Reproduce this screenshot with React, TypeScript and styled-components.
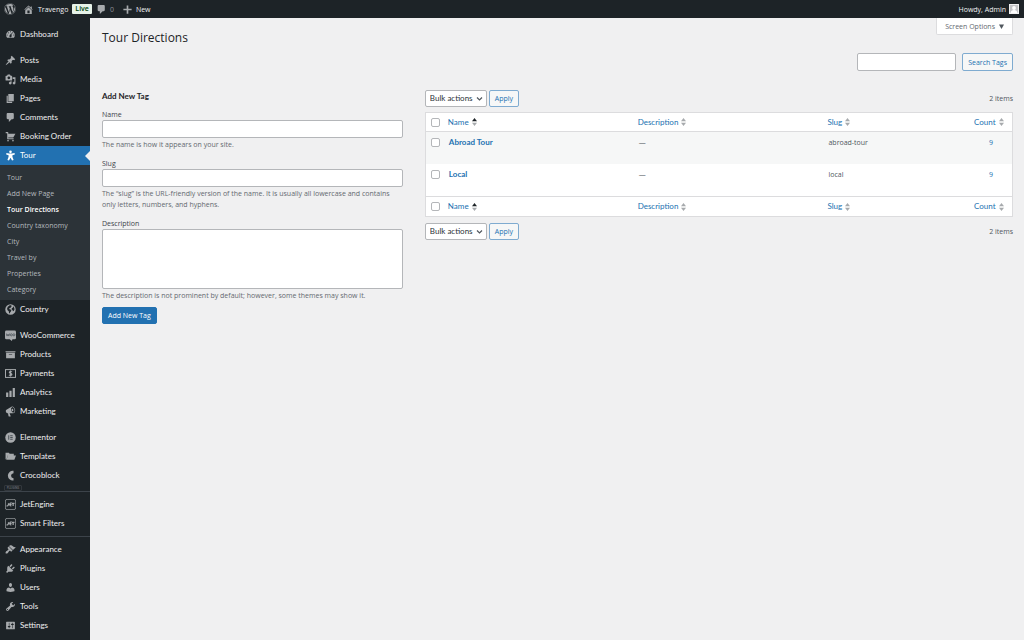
import React from "react";
import styled, { createGlobalStyle } from "styled-components";
import { FaWordpress } from "react-icons/fa";

const Global = createGlobalStyle`
  *, *::before, *::after { box-sizing: border-box; }
  body {
    margin: 0;
    background: #f0f0f1;
    color: #3c434a;
    font-family: "Open Sans", "Noto Sans", sans-serif;
    font-size: 7px;
    line-height: 11px;
  }
  a { color: #2271b1; text-decoration: none; }
  button, input, select, textarea { font: inherit; color: inherit; margin: 0; }
`;

const menuFont = `Lato, "Open Sans", sans-serif`;

/* ---------- icons ---------- */

const Svg = styled.svg<{ $size?: number }>`
  display: block;
  flex: none;
  width: ${(p) => p.$size ?? 11}px;
  height: ${(p) => p.$size ?? 11}px;
  fill: currentColor;
`;

const paths = {
  dashboard:
    "M3.76 16h12.48c1.1-1.37 1.76-3.11 1.76-5 0-4.42-3.58-8-8-8s-8 3.58-8 8c0 1.89.66 3.63 1.76 5zM10 4c.55 0 1 .45 1 1s-.45 1-1 1-1-.45-1-1 .45-1 1-1zM6 6c.55 0 1 .45 1 1s-.45 1-1 1-1-.45-1-1 .45-1 1-1zm8 0c.55 0 1 .45 1 1s-.45 1-1 1-1-.45-1-1 .45-1 1-1zm-5.37 5.55L12 7v6c0 1.1-.9 2-2 2s-2-.9-2-2c0-.57.24-1.08.63-1.45zM4 10c.55 0 1 .45 1 1s-.45 1-1 1-1-.45-1-1 .45-1 1-1zm12 0c.55 0 1 .45 1 1s-.45 1-1 1-1-.45-1-1 .45-1 1-1z",
  post: "M10.44 3.02l1.82-1.82 6.36 6.35-1.83 1.82c-1.05-.68-2.48-.57-3.41.36l-.75.75c-.92.93-1.04 2.35-.35 3.41l-1.83 1.82-2.41-2.41-2.8 2.79c-.42.42-3.38 2.71-3.8 2.29s1.86-3.39 2.28-3.81l2.79-2.79L4.1 9.36l1.83-1.82c1.05.69 2.48.57 3.4-.36l.75-.75c.93-.92 1.05-2.35.36-3.41z",
  media:
    "M13 11V4c0-.55-.45-1-1-1h-1.67L9 1H5L3.67 3H2c-.55 0-1 .45-1 1v7c0 .55.45 1 1 1h10c.55 0 1-.45 1-1zM7 4.5c1.38 0 2.5 1.12 2.5 2.5S8.38 9.5 7 9.5 4.5 8.38 4.5 7 5.62 4.5 7 4.5zM14 6h5v10.5c0 1.38-1.12 2.5-2.5 2.5S14 17.88 14 16.5s1.12-2.5 2.5-2.5c.17 0 .34.02.5.05V9h-3V6zm-4 8.05V13h2v3.5c0 1.38-1.12 2.5-2.5 2.5S7 17.88 7 16.5 8.12 14 9.5 14c.17 0 .34.02.5.05z",
  page: "M6 15V2h10v13H6zm-1 1h8v2H3V5h2v11z",
  comment:
    "M5 2h9c1.1 0 2 .9 2 2v7c0 1.1-.9 2-2 2h-2l-5 5v-5H5c-1.1 0-2-.9-2-2V4c0-1.1.9-2 2-2z",
  cart: "M6 13h9c.55 0 1 .45 1 1s-.45 1-1 1H5c-.55 0-1-.45-1-1V4H2c-.55 0-1-.45-1-1s.45-1 1-1h3c.55 0 1 .45 1 1v2h13l-4 7H6v1zm-.5 3c.83 0 1.5.67 1.5 1.5S6.33 19 5.5 19 4 18.33 4 17.5 4.67 16 5.5 16zm9 0c.83 0 1.5.67 1.5 1.5s-.67 1.5-1.5 1.5-1.5-.67-1.5-1.5.67-1.5 1.5-1.5z",
  person:
    "M10 1a2.400 2.400 0 1 1 0 4.800 2.400 2.400 0 0 1 0-4.800zM2.600 5.600l5 .700h4.800l5-.700.4 2.600-4.300 1.200v3l2.100 5.800-2.800.900L10 14.200l-2.800 4.900-2.800-.9 2.100-5.800v-3L2.200 8.200z",
  globe:
    "M10 0.500a9.500 9.500 0 1 0 0 19 9.500 9.500 0 0 0 0-19zm-1.500 1.700l2.600.200 1.200 1.600-1.700 1.300-.6 1.800-2.100.4-.5 1.700 2.700.6 1.500 1.700-.9 2.100-1.300 1.600-.6 2.200-1.500-.9-.4-3.200-2.200-2-.9-2.700 1-3.300zm6.300 2.100l2 2.700.4 2.900-1.300 2.900-1.500.400-.7-2.200-1.700-.9.300-2.300 1.900-.9z",
  archive: "M19 4v2H1V4h18zM2 7h16v10H2V7zm11 3V9H7v1h6z",
  chart: "M18 18V2h-4v16h4zm-6 0V7H8v11h4zm-6 0v-8H2v8h4z",
  megaphone:
    "M18.15 5.94c.46 1.62.38 3.22-.02 4.48-.42 1.28-1.26 2.18-2.3 2.48-.16.06-.26.06-.4.06-.06.02-.12.02-.18.02-.06.02-.14.02-.22.02h-6.8l2.22 5.5c.02.14-.06.26-.14.34-.08.1-.24.16-.34.16H6.95c-.1 0-.26-.06-.34-.16-.08-.08-.16-.2-.14-.34l-1-5.5H4.25l-.02-.02c-.5.06-1.08-.18-1.54-.62s-.88-1.08-1.06-1.88c-.24-.8-.2-1.56-.02-2.2.18-.62.58-1.08 1.06-1.3l.02-.02 9-5.4c.1-.06.18-.1.24-.16.06-.04.14-.08.24-.12.16-.08.28-.12.5-.18 1.04-.3 2.24.1 3.22.98s1.84 2.24 2.26 3.86zm-2.58 5.98h-.02c.4-.1.74-.34 1.04-.7.58-.7.86-1.76.86-3.04 0-.64-.1-1.3-.28-1.98-.34-1.36-1.02-2.5-1.78-3.24s-1.68-1.1-2.46-.88c-.82.22-1.4.96-1.7 2-.32 1.04-.28 2.36.06 3.72.38 1.36 1 2.5 1.8 3.24.78.74 1.62 1.1 2.48.88zm-2.54-7.08c.22-.04.42-.02.62.04.38.16.76.48 1.02 1s.42 1.2.42 1.78c0 .3-.04.56-.12.8-.18.48-.44.84-.86.94-.34.1-.8-.06-1.14-.4s-.64-.86-.78-1.5c-.18-.62-.12-1.24.02-1.72s.48-.84.82-.94z",
  folder: "M1 15V3h6l1.500 2H16V8H5L2.500 15.500zM2.600 16L5.400 8H20L17 16z",
  crescent:
    "M15.500 1.500v4.300A4.600 4.600 0 0 0 11 10.300a4.800 4.800 0 0 0 4.500 4.700v4A9 9 0 0 1 5.200 10.200 8.900 8.900 0 0 1 15.500 1.500z",
  appearance:
    "M14.48 11.06L7.41 3.99l1.5-1.5c.5-.56 2.3-.47 3.51.32 1.21.8 1.43 1.28 2.91 2.1 1.18.64 2.45 1.26 4.45.85zm-.71.71L6.7 4.7 4.93 6.47c-.39.39-.39 1.02 0 1.41l1.06 1.06c.39.39.39 1.03 0 1.42-.6.6-1.43 1.11-2.21 1.69-.35.26-.7.53-1.01.84C1.43 14.23.4 16.08 1.4 17.07c.99 1 2.84-.03 4.18-1.36.31-.31.58-.66.85-1.02.57-.78 1.08-1.61 1.69-2.21.39-.39 1.02-.39 1.41 0l1.06 1.06c.39.39 1.02.39 1.41 0z",
  plugins:
    "M13.11 4.36L9.87 7.6 8 5.73l3.24-3.24c.35-.34 1.05-.2 1.56.32.52.51.66 1.21.31 1.55zm-8 1.77l.91-1.12 9.01 9.01-1.19.84c-.71.71-2.63 1.16-3.82 1.16H6.14L4.9 17.26c-.59.59-1.54.59-2.12 0-.59-.58-.59-1.53 0-2.12l1.24-1.24v-3.88c0-1.13.4-3.19 1.09-3.89zm7.26 3.97l3.24-3.24c.34-.35 1.04-.21 1.55.31.52.51.66 1.21.31 1.55l-3.24 3.25z",
  users:
    "M10 9.25c-2.27 0-2.73-3.44-2.73-3.44C7 4.02 7.82 2 9.97 2c2.16 0 2.98 2.02 2.71 3.81 0 0-.41 3.44-2.68 3.44zm0 2.57L12.72 10c2.39 0 4.52 2.33 4.52 4.53v2.49s-3.65 1.13-7.24 1.13c-3.65 0-7.24-1.13-7.24-1.13v-2.49c0-2.25 1.94-4.48 4.47-4.48z",
  tools:
    "M16.68 9.77c-1.34 1.34-3.3 1.67-4.95.99l-5.41 6.52c-.99.99-2.59.99-3.58 0s-.99-2.59 0-3.57l6.52-5.42c-.68-1.65-.35-3.61.99-4.95 1.28-1.28 3.12-1.62 4.72-1.06l-2.89 2.89 2.82 2.82 2.86-2.87c.53 1.58.18 3.39-1.08 4.65zM3.81 16.21c.4.39 1.04.39 1.43 0 .4-.4.4-1.04 0-1.43-.39-.4-1.03-.4-1.43 0-.39.39-.39 1.03 0 1.43z",
  settings:
    "M18 16V4c0-.55-.45-1-1-1H3c-.55 0-1 .45-1 1v12c0 .55.45 1 1 1h14c.55 0 1-.45 1-1zM8 11h1c.55 0 1 .45 1 1s-.45 1-1 1H8v1.5c0 .28-.22.5-.5.5s-.5-.22-.5-.5V13H6c-.55 0-1-.45-1-1s.45-1 1-1h1V5.5c0-.28.22-.5.5-.5s.5.22.5.5V11zm5-2h-1c-.55 0-1-.45-1-1s.45-1 1-1h1V5.5c0-.28.22-.5.5-.5s.5.22.5.5V7h1c.55 0 1 .45 1 1s-.45 1-1 1h-1v5.5c0 .28-.22.5-.5.5s-.5-.22-.5-.5V9z",
  home: "M16 8.5l1.53 1.53-1.06 1.06L10 4.6l-6.47 6.49-1.06-1.06L10 2.5l4 4v-2h2v4zm-6-2.46l6 5.99V18H4v-5.97zM12 17v-5H8v5h4z",
  plus: "M17.500 8.500v3h-6v6H8.500v-6H2.500V8.500h6V2.500h3v6z",
};

type PathName = keyof typeof paths;
type IconName = PathName | "woo" | "money" | "elementor" | "jet";

const Icon = ({ name, size }: { name: IconName; size?: number }) => {
  const common = { $size: size, viewBox: "0 0 20 20", "aria-hidden": true } as const;
  if (name === "woo")
    return (
      <Svg {...common}>
        <path d="M2.500 1h15A2.500 2.500 0 0 1 20 3.500v11a2.500 2.500 0 0 1-2.500 2.500H13.500l-1 3L8.500 17h-6A2.500 2.500 0 0 1 0 14.500v-11A2.500 2.500 0 0 1 2.500 1z" />
        <path d="M2.500 6.500l1.200 4.500L5.500 7.500l1.500 3.500L8.200 6.500" fill="none" stroke="#50575e" strokeWidth="1.500" />
        <circle cx="11.500" cy="8.800" r="1.900" fill="none" stroke="#50575e" strokeWidth="1.500" />
        <circle cx="16.200" cy="8.800" r="1.900" fill="none" stroke="#50575e" strokeWidth="1.500" />
      </Svg>
    );
  if (name === "money")
    return (
      <Svg {...common}>
        <rect x="0.900" y="2.900" width="18.200" height="14.200" fill="none" stroke="currentColor" strokeWidth="1.800" />
        <path
          d="M12.600 7.200C11.500 6 7.700 6.200 7.900 8c.2 2 4.600 1.600 4.600 3.900 0 2.100-4 2.200-5.100.7M10 4.600v10.800"
          fill="none"
          stroke="currentColor"
          strokeWidth="2.200"
        />
      </Svg>
    );
  if (name === "elementor")
    return (
      <Svg {...common}>
        <circle cx="10" cy="10" r="9.500" />
        <path d="M6.800 6v8M9.500 6.800h4.500M9.500 10h4.500M9.500 13.200h4.500" fill="none" stroke="#3c434a" strokeWidth="1.600" />
      </Svg>
    );
  if (name === "jet")
    return (
      <Svg {...common}>
        <rect x="0.700" y="0.700" width="18.600" height="18.600" rx="3" fill="none" stroke="currentColor" strokeWidth="1.300" />
        <path
          d="M2.800 12.200c2.600 1.200 3.600-.8 3.600-4.700M7.500 10h4.500M12 7.200c-4-.8-5 5.600-.5 5.200M12.500 7.800h4.800M14.800 7.800v5"
          fill="none"
          stroke="currentColor"
          strokeWidth="2.200"
        />
      </Svg>
    );
  return (
    <Svg {...common}>
      <path fillRule="evenodd" d={paths[name]} />
    </Svg>
  );
};

/* ---------- admin bar ---------- */

const AdminBar = styled.header`
  display: flex;
  justify-content: space-between;
  align-items: center;
  height: 18px;
  padding: 0 5px 0 4px;
  background: #1d2327;
  color: #f0f0f1;
`;

const BarGroup = styled.nav`
  display: flex;
  align-items: center;
`;

const BarLink = styled.a<{ $before?: number; $gap?: number }>`
  display: flex;
  align-items: center;
  gap: ${(p) => p.$gap ?? 4}px;
  margin-left: ${(p) => p.$before ?? 0}px;
  color: #f0f0f1;
  svg { color: #a7aaad; }
`;

const Muted = styled.span`
  color: #8c8f94;
`;

const LiveBadge = styled.span`
  margin-left: 4px;
  padding: 0 3px;
  line-height: 10px;
  border-radius: 1px;
  background: #e6f2e8;
  color: #00450c;
  font-weight: 600;
`;

const Avatar = styled.svg`
  display: block;
  width: 10px;
  height: 10px;
`;

/* ---------- side menu ---------- */

const Shell = styled.div`
  display: flex;
  min-height: calc(100vh - 18px);
`;

const Sidebar = styled.nav`
  flex: none;
  width: 90px;
  padding-top: 7px;
  background: #1d2327;
`;

const List = styled.ul`
  margin: 0;
  padding: 0;
  list-style: none;
`;

const MenuLink = styled.a<{ $current?: boolean }>`
  position: relative;
  display: flex;
  align-items: center;
  gap: 4px;
  height: 19px;
  padding-left: 5px;
  font-family: ${menuFont};
  font-size: 8px;
  color: ${(p) => (p.$current ? "#fff" : "#f0f0f1")};
  background: ${(p) => (p.$current ? "#2271b1" : "transparent")};
  svg { color: ${(p) => (p.$current ? "#fff" : "#a7aaad")}; }
  ${(p) =>
    p.$current &&
    `&::after {
      content: "";
      position: absolute;
      right: 0;
      top: 5px;
      border: 5px solid transparent;
      border-left-width: 0;
      border-right-color: #f0f0f1;
    }`}
`;

const SubList = styled(List)`
  padding: 5px 0 2px;
  background: #2c3338;
`;

const SubLink = styled.a<{ $current?: boolean }>`
  display: block;
  padding-left: 7px;
  line-height: 16px;
  color: ${(p) => (p.$current ? "#fff" : "#b4b9be")};
  font-weight: ${(p) => (p.$current ? 600 : 400)};
`;

const Gap = styled.li<{ $line?: boolean }>`
  height: 7px;
  padding-top: 3px;
  &::after {
    content: "";
    display: ${(p) => (p.$line ? "block" : "none")};
    border-top: 1px solid #3c434a;
  }
`;

const PluginsGap = styled.li`
  height: 10px;
  &::after {
    content: "";
    display: block;
    border-top: 1px solid #3c434a;
  }
`;

const PluginsTag = styled.span`
  display: block;
  width: 18px;
  height: 6px;
  margin-left: 4px;
  border: 1px solid #32373c;
  border-radius: 1px;
  color: #8c8f94;
  font-size: 3px;
  line-height: 4px;
  text-align: center;
`;

type Entry = { icon: IconName; label: string; sub?: string[] } | "gap" | "line" | "plugins";

const menu: Entry[] = [
  { icon: "dashboard", label: "Dashboard" },
  "gap",
  { icon: "post", label: "Posts" },
  { icon: "media", label: "Media" },
  { icon: "page", label: "Pages" },
  { icon: "comment", label: "Comments" },
  { icon: "cart", label: "Booking Order" },
  {
    icon: "person",
    label: "Tour",
    sub: [
      "Tour",
      "Add New Page",
      "Tour Directions",
      "Country taxonomy",
      "City",
      "Travel by",
      "Properties",
      "Category",
    ],
  },
  { icon: "globe", label: "Country" },
  "gap",
  { icon: "woo", label: "WooCommerce" },
  { icon: "archive", label: "Products" },
  { icon: "money", label: "Payments" },
  { icon: "chart", label: "Analytics" },
  { icon: "megaphone", label: "Marketing" },
  "gap",
  { icon: "elementor", label: "Elementor" },
  { icon: "folder", label: "Templates" },
  { icon: "crescent", label: "Crocoblock" },
  "plugins",
  { icon: "jet", label: "JetEngine" },
  { icon: "jet", label: "Smart Filters" },
  "line",
  { icon: "appearance", label: "Appearance" },
  { icon: "plugins", label: "Plugins" },
  { icon: "users", label: "Users" },
  { icon: "tools", label: "Tools" },
  { icon: "settings", label: "Settings" },
];

const SideMenu = () => (
  <Sidebar aria-label="Main menu">
    <List>
      {menu.map((entry, i) => {
        if (entry === "gap") return <Gap key={i} />;
        if (entry === "line") return <Gap key={i} $line />;
        if (entry === "plugins")
          return (
            <PluginsGap key={i}>
              <PluginsTag>PLUGINS</PluginsTag>
            </PluginsGap>
          );
        return (
          <li key={i}>
            <MenuLink href="#" $current={!!entry.sub}>
              <Icon name={entry.icon} />
              {entry.label}
            </MenuLink>
            {entry.sub && (
              <SubList>
                {entry.sub.map((label) => (
                  <li key={label}>
                    <SubLink href="#" $current={label === "Tour Directions"}>
                      {label}
                    </SubLink>
                  </li>
                ))}
              </SubList>
            )}
          </li>
        );
      })}
    </List>
  </Sidebar>
);

/* ---------- content ---------- */

const Main = styled.main`
  flex: 1;
  min-width: 0;
  padding: 0 11px 0 12px;
`;

const TopRow = styled.div`
  display: flex;
  justify-content: space-between;
  align-items: flex-start;
  height: 35px;
`;

const Title = styled.h1`
  margin: 10px 0 0;
  font-size: 12px;
  font-weight: 400;
  line-height: 20px;
  color: #1d2327;
`;

const ScreenOptions = styled.button`
  display: flex;
  align-items: center;
  gap: 4px;
  height: 17px;
  padding: 0 8px;
  border: 1px solid #dcdcde;
  border-top: 0;
  border-radius: 0 0 2px 2px;
  background: #fff;
  color: #646970;
`;

const TextInput = styled.input`
  display: block;
  width: 100%;
  height: 18px;
  padding: 0 4px;
  border: 1px solid #b4b6b9;
  border-radius: 2px;
  background: #fff;
`;

const Button = styled.button<{ $primary?: boolean }>`
  height: 17px;
  padding: 0 5px;
  border: 1px solid ${(p) => (p.$primary ? "#2271b1" : "#7fabd0")};
  border-radius: 2px;
  background: ${(p) => (p.$primary ? "#2271b1" : "#f6f7f7")};
  color: ${(p) => (p.$primary ? "#fff" : "#2271b1")};
  white-space: nowrap;
`;

const SearchForm = styled.form`
  display: flex;
  justify-content: flex-end;
  gap: 6px;
  ${TextInput} { width: 99px; }
  ${Button} { height: 18px; }
`;

const Columns = styled.div`
  display: grid;
  grid-template-columns: 35fr 65fr;
  margin-top: 19px;
`;

const AddForm = styled.form`
  padding-right: 18px;
`;

const FormTitle = styled.h2`
  margin: 0 0 6px;
  font-family: ${menuFont};
  font-size: 8px;
  font-weight: 700;
  line-height: 13px;
  color: #1d2327;
`;

const Field = styled.div`
  margin-bottom: 8px;
  &:last-of-type { margin-bottom: 6px; }
  label { display: block; }
`;

const TextArea = styled.textarea`
  display: block;
  width: 100%;
  height: 60px;
  border: 1px solid #b4b6b9;
  border-radius: 2px;
  background: #fff;
  resize: none;
`;

const Help = styled.p`
  margin: 1px 0 0;
  color: #646970;
`;

const ListPane = styled.section`
  padding-left: 4px;
  min-width: 0;
`;

const TableNav = styled.div`
  display: flex;
  align-items: center;
  gap: 2px;
  height: 17px;
`;

const SelectBox = styled.span`
  position: relative;
  display: block;
  svg {
    position: absolute;
    right: 4px;
    top: 6px;
    width: 7px;
    height: 6px;
    pointer-events: none;
  }
`;

const Select = styled.select`
  appearance: none;
  display: block;
  width: 62px;
  height: 17px;
  padding: 0 12px 0 4px;
  border: 1px solid #b4b6b9;
  border-radius: 2px;
  background: #fff;
  color: #2c3338;
  font-family: ${menuFont};
  font-size: 8px;
`;

const ItemCount = styled.span`
  margin-left: auto;
  color: #50575e;
`;

const Table = styled.table`
  width: 100%;
  margin: 5px 0 6px;
  table-layout: fixed;
  border: 1px solid #dcdcde;
  border-collapse: separate;
  border-spacing: 0;
  background: #fff;
  th, td { padding: 0 5px; text-align: left; font-weight: 400; }
  thead th { height: 19px; border-bottom: 1px solid #dcdcde; }
  tfoot th { height: 20px; border-top: 1px solid #dcdcde; }
  tbody td { height: 32px; padding: 5px 5px 0 6px; vertical-align: top; color: #50575e; }
  tbody th { height: 32px; padding-top: 6px; vertical-align: top; }
  tbody tr:nth-child(odd) { background: #f6f7f7; }
`;

const Col = styled.col<{ $width?: string }>`
  width: ${(p) => p.$width ?? "auto"};
`;

const Check = styled.input`
  appearance: none;
  display: block;
  width: 9px;
  height: 9px;
  border: 1px solid #b4b6b9;
  border-radius: 2px;
  background: #fff;
`;

const SortLink = styled.a`
  display: flex;
  align-items: center;
  gap: 3px;
  font-family: ${menuFont};
  font-size: 8px;
  svg { width: 5px; height: 8px; }
`;

const TermLink = styled.a`
  font-family: ${menuFont};
  font-size: 8px;
  font-weight: 700;
`;

const CountCell = styled.td`
  && { text-align: center; }
`;

const SortIcon = ({ active }: { active?: boolean }) => (
  <svg viewBox="0 0 10 16" aria-hidden="true">
    <path d="M5 0l5 6.500H0z" fill={active ? "#1d2327" : "#a7aaad"} />
    <path d="M5 16l5-6.500H0z" fill="#a7aaad" />
  </svg>
);

const HeadRow = ({ place }: { place: string }) => (
  <tr>
    <th>
      <Check type="checkbox" aria-label={`Select all, ${place}`} />
    </th>
    {["Name", "Description", "Slug", "Count"].map((label) => (
      <th key={label} scope="col">
        <SortLink href="#">
          {label}
          <SortIcon active={label === "Name"} />
        </SortLink>
      </th>
    ))}
  </tr>
);

const BulkNav = ({ place }: { place: string }) => (
  <TableNav>
    <SelectBox>
      <Select aria-label={`Bulk action, ${place}`}>
        <option>Bulk actions</option>
      </Select>
      <svg viewBox="0 0 14 12" aria-hidden="true">
        <path d="M2 3l5 5 5-5" fill="none" stroke="#50575e" strokeWidth="2.400" />
      </svg>
    </SelectBox>
    <Button type="button">Apply</Button>
    <ItemCount>2 items</ItemCount>
  </TableNav>
);

const terms = [
  { name: "Abroad Tour", slug: "abroad-tour", count: 9 },
  { name: "Local", slug: "local", count: 9 },
];

export default function App() {
  return (
    <>
      <Global />
      <AdminBar>
        <BarGroup aria-label="Toolbar">
          <BarLink href="#" aria-label="About WordPress">
            <FaWordpress size={12} />
          </BarLink>
          <BarLink href="#" $before={7}>
            <Icon name="home" />
            Travengo
          </BarLink>
          <LiveBadge>Live</LiveBadge>
          <BarLink href="#" $before={4} $gap={3}>
            <Icon name="comment" />
            <Muted>0</Muted>
          </BarLink>
          <BarLink href="#" $before={8} $gap={3}>
            <Icon name="plus" />
            New
          </BarLink>
        </BarGroup>
        <BarLink href="#" $gap={3}>
          Howdy, Admin
          <Avatar viewBox="0 0 20 20" aria-hidden="true">
            <rect width="20" height="20" fill="#f0f0f1" />
            <rect x="2" y="2" width="16" height="16" fill="#c3c4c7" />
            <circle cx="10" cy="8" r="3.800" fill="#fff" />
            <path d="M3 18c.5-4 3-6 7-6s6.500 2 7 6z" fill="#fff" />
          </Avatar>
        </BarLink>
      </AdminBar>
      <Shell>
        <SideMenu />
        <Main>
          <TopRow>
            <Title>Tour Directions</Title>
            <ScreenOptions type="button">
              Screen Options
              <svg width="5" height="5" viewBox="0 0 10 10" aria-hidden="true">
                <path d="M0 1h10L5 10z" fill="#50575e" />
              </svg>
            </ScreenOptions>
          </TopRow>
          <SearchForm>
            <TextInput type="search" aria-label="Search Tags" />
            <Button type="button">Search Tags</Button>
          </SearchForm>
          <Columns>
            <AddForm>
              <FormTitle>Add New Tag</FormTitle>
              <Field>
                <label htmlFor="tag-name">Name</label>
                <TextInput id="tag-name" />
                <Help>The name is how it appears on your site.</Help>
              </Field>
              <Field>
                <label htmlFor="tag-slug">Slug</label>
                <TextInput id="tag-slug" />
                <Help>
                  The “slug” is the URL-friendly version of the name. It is usually all lowercase and contains
                  only letters, numbers, and hyphens.
                </Help>
              </Field>
              <Field>
                <label htmlFor="tag-description">Description</label>
                <TextArea id="tag-description" />
                <Help>The description is not prominent by default; however, some themes may show it.</Help>
              </Field>
              <Button type="button" $primary>
                Add New Tag
              </Button>
            </AddForm>
            <ListPane>
              <BulkNav place="top" />
              <Table>
                <colgroup>
                  <Col $width="17px" />
                  <Col />
                  <Col />
                  <Col $width="25%" />
                  <Col $width="43px" />
                </colgroup>
                <thead>
                  <HeadRow place="top" />
                </thead>
                <tbody>
                  {terms.map((term) => (
                    <tr key={term.slug}>
                      <th>
                        <Check type="checkbox" aria-label={`Select ${term.name}`} />
                      </th>
                      <td>
                        <TermLink href="#">{term.name}</TermLink>
                      </td>
                      <td>—</td>
                      <td>{term.slug}</td>
                      <CountCell>
                        <a href="#">{term.count}</a>
                      </CountCell>
                    </tr>
                  ))}
                </tbody>
                <tfoot>
                  <HeadRow place="bottom" />
                </tfoot>
              </Table>
              <BulkNav place="bottom" />
            </ListPane>
          </Columns>
        </Main>
      </Shell>
    </>
  );
}
